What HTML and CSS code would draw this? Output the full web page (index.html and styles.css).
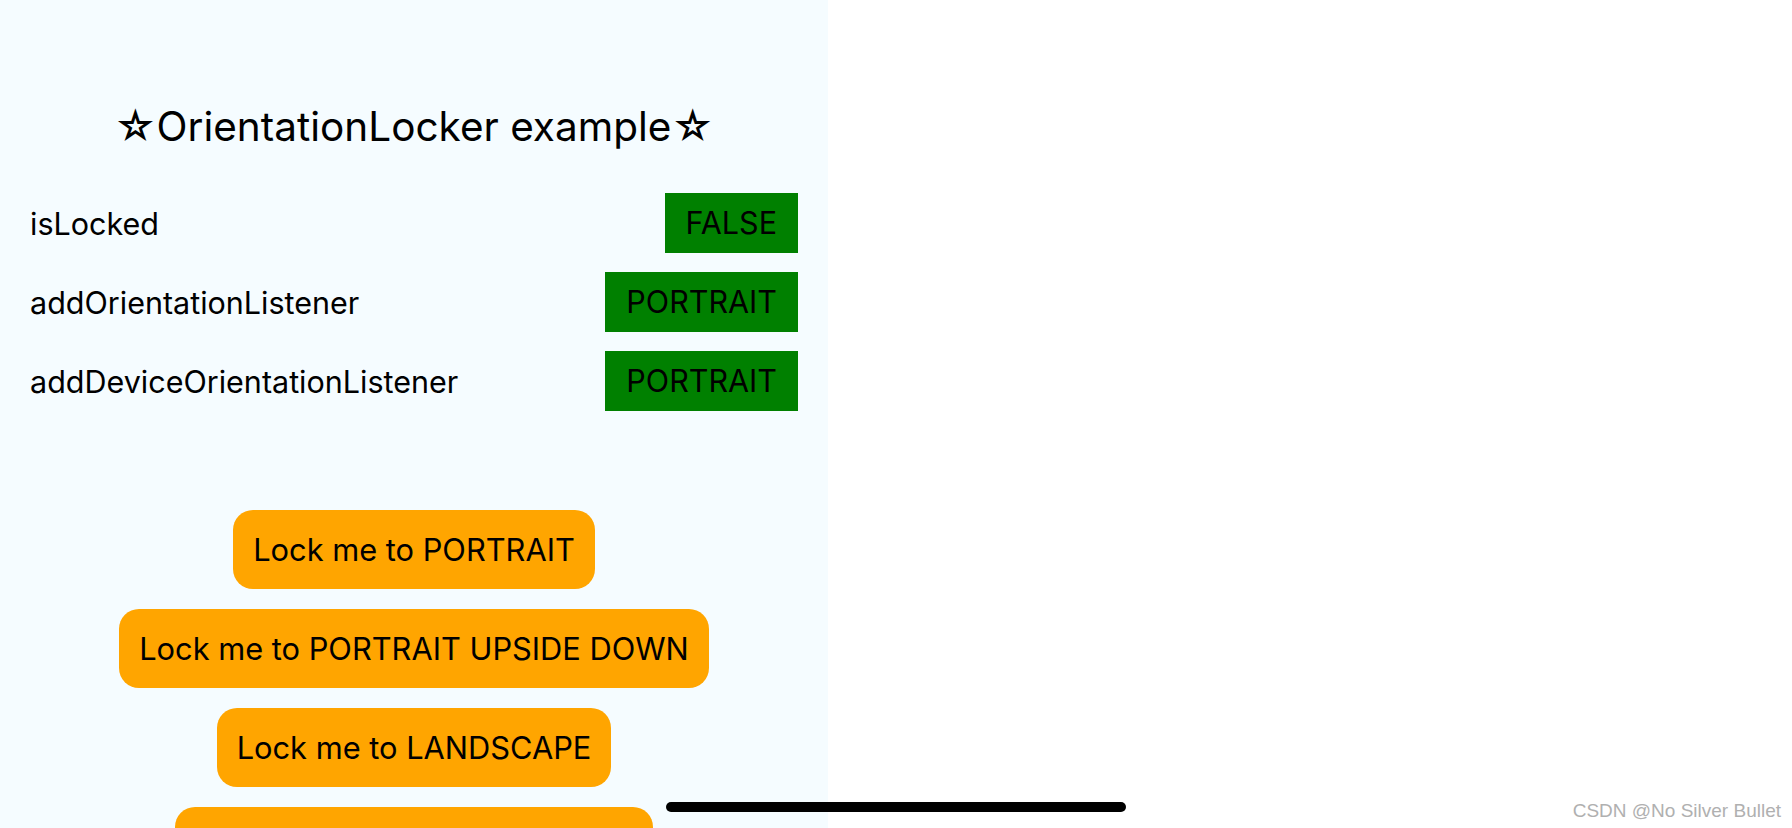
FILE: index.html
```html
<!DOCTYPE html>
<html lang="en">
<head>
    <meta charset="UTF-8">
    <title>OrientationLocker example</title>
    <meta name="viewport" content="width=device-width, initial-scale=1.0">
    <link rel="stylesheet" href="styles.css">
</head>
<body>
    <div class="screen">
        <div class="container">
            <h1 class="title">☆OrientationLocker example☆</h1>

            <div class="row">
                <span class="label">isLocked</span>
                <span class="value">FALSE</span>
            </div>
            <div class="row">
                <span class="label">addOrientationListener</span>
                <span class="value">PORTRAIT</span>
            </div>
            <div class="row">
                <span class="label">addDeviceOrientationListener</span>
                <span class="value">PORTRAIT</span>
            </div>

            <div class="buttons">
                <button class="lock">Lock me to PORTRAIT</button>
                <button class="lock">Lock me to PORTRAIT UPSIDE DOWN</button>
                <button class="lock">Lock me to LANDSCAPE</button>
                <button class="lock">Lock me to LANDSCAPE LEFT</button>
            </div>
        </div>
        <div class="blank"></div>

        <div class="home-indicator"></div>
        <div class="watermark">CSDN @No Silver Bullet</div>
    </div>
</body>
</html>
```

FILE: styles.css
```css
body {
    margin: 0;
    background: #fff;
    font-family: Inter, 'Noto Sans', sans-serif;
    color: #000;
}
.screen {
    position: relative;
    display: flex;
    width: 1792px;
    height: 828px;
    overflow: hidden;
}
.container {
    width: 828px;
    height: 828px;
    flex: none;
    background: #F5FCFF;
    padding-top: 103px;
    box-sizing: border-box;
}
.blank {
    flex: 1;
    background: #fff;
}
.title {
    margin: 0 0 42px;
    font-size: 40.5px;
    font-weight: normal;
    line-height: 48px;
    text-align: center;
}
.row {
    display: flex;
    justify-content: space-between;
    align-items: center;
    height: 60px;
    padding: 0 30px;
    margin-bottom: 19px;
}
.label {
    font-size: 30.5px;
}
.value {
    background: green;
    font-size: 30.5px;
    line-height: 60px;
    padding: 0 21px;
}
.buttons {
    display: flex;
    flex-direction: column;
    align-items: center;
    gap: 20px;
    margin-top: 99px;
}
.lock {
    height: 79px;
    padding: 0 20px;
    border: none;
    border-radius: 20px;
    background: orange;
    color: #000;
    font-family: inherit;
    font-size: 30.8px;
    cursor: pointer;
}
.home-indicator {
    position: absolute;
    left: 666px;
    top: 802px;
    width: 460px;
    height: 10px;
    border-radius: 5px;
    background: #000;
}
.watermark {
    position: absolute;
    right: 11px;
    top: 800px;
    font-family: 'Liberation Sans', Arial, sans-serif;
    font-size: 19px;
    color: #b0b0b0;
    text-shadow: 0 0 1px #fff;
}
```
